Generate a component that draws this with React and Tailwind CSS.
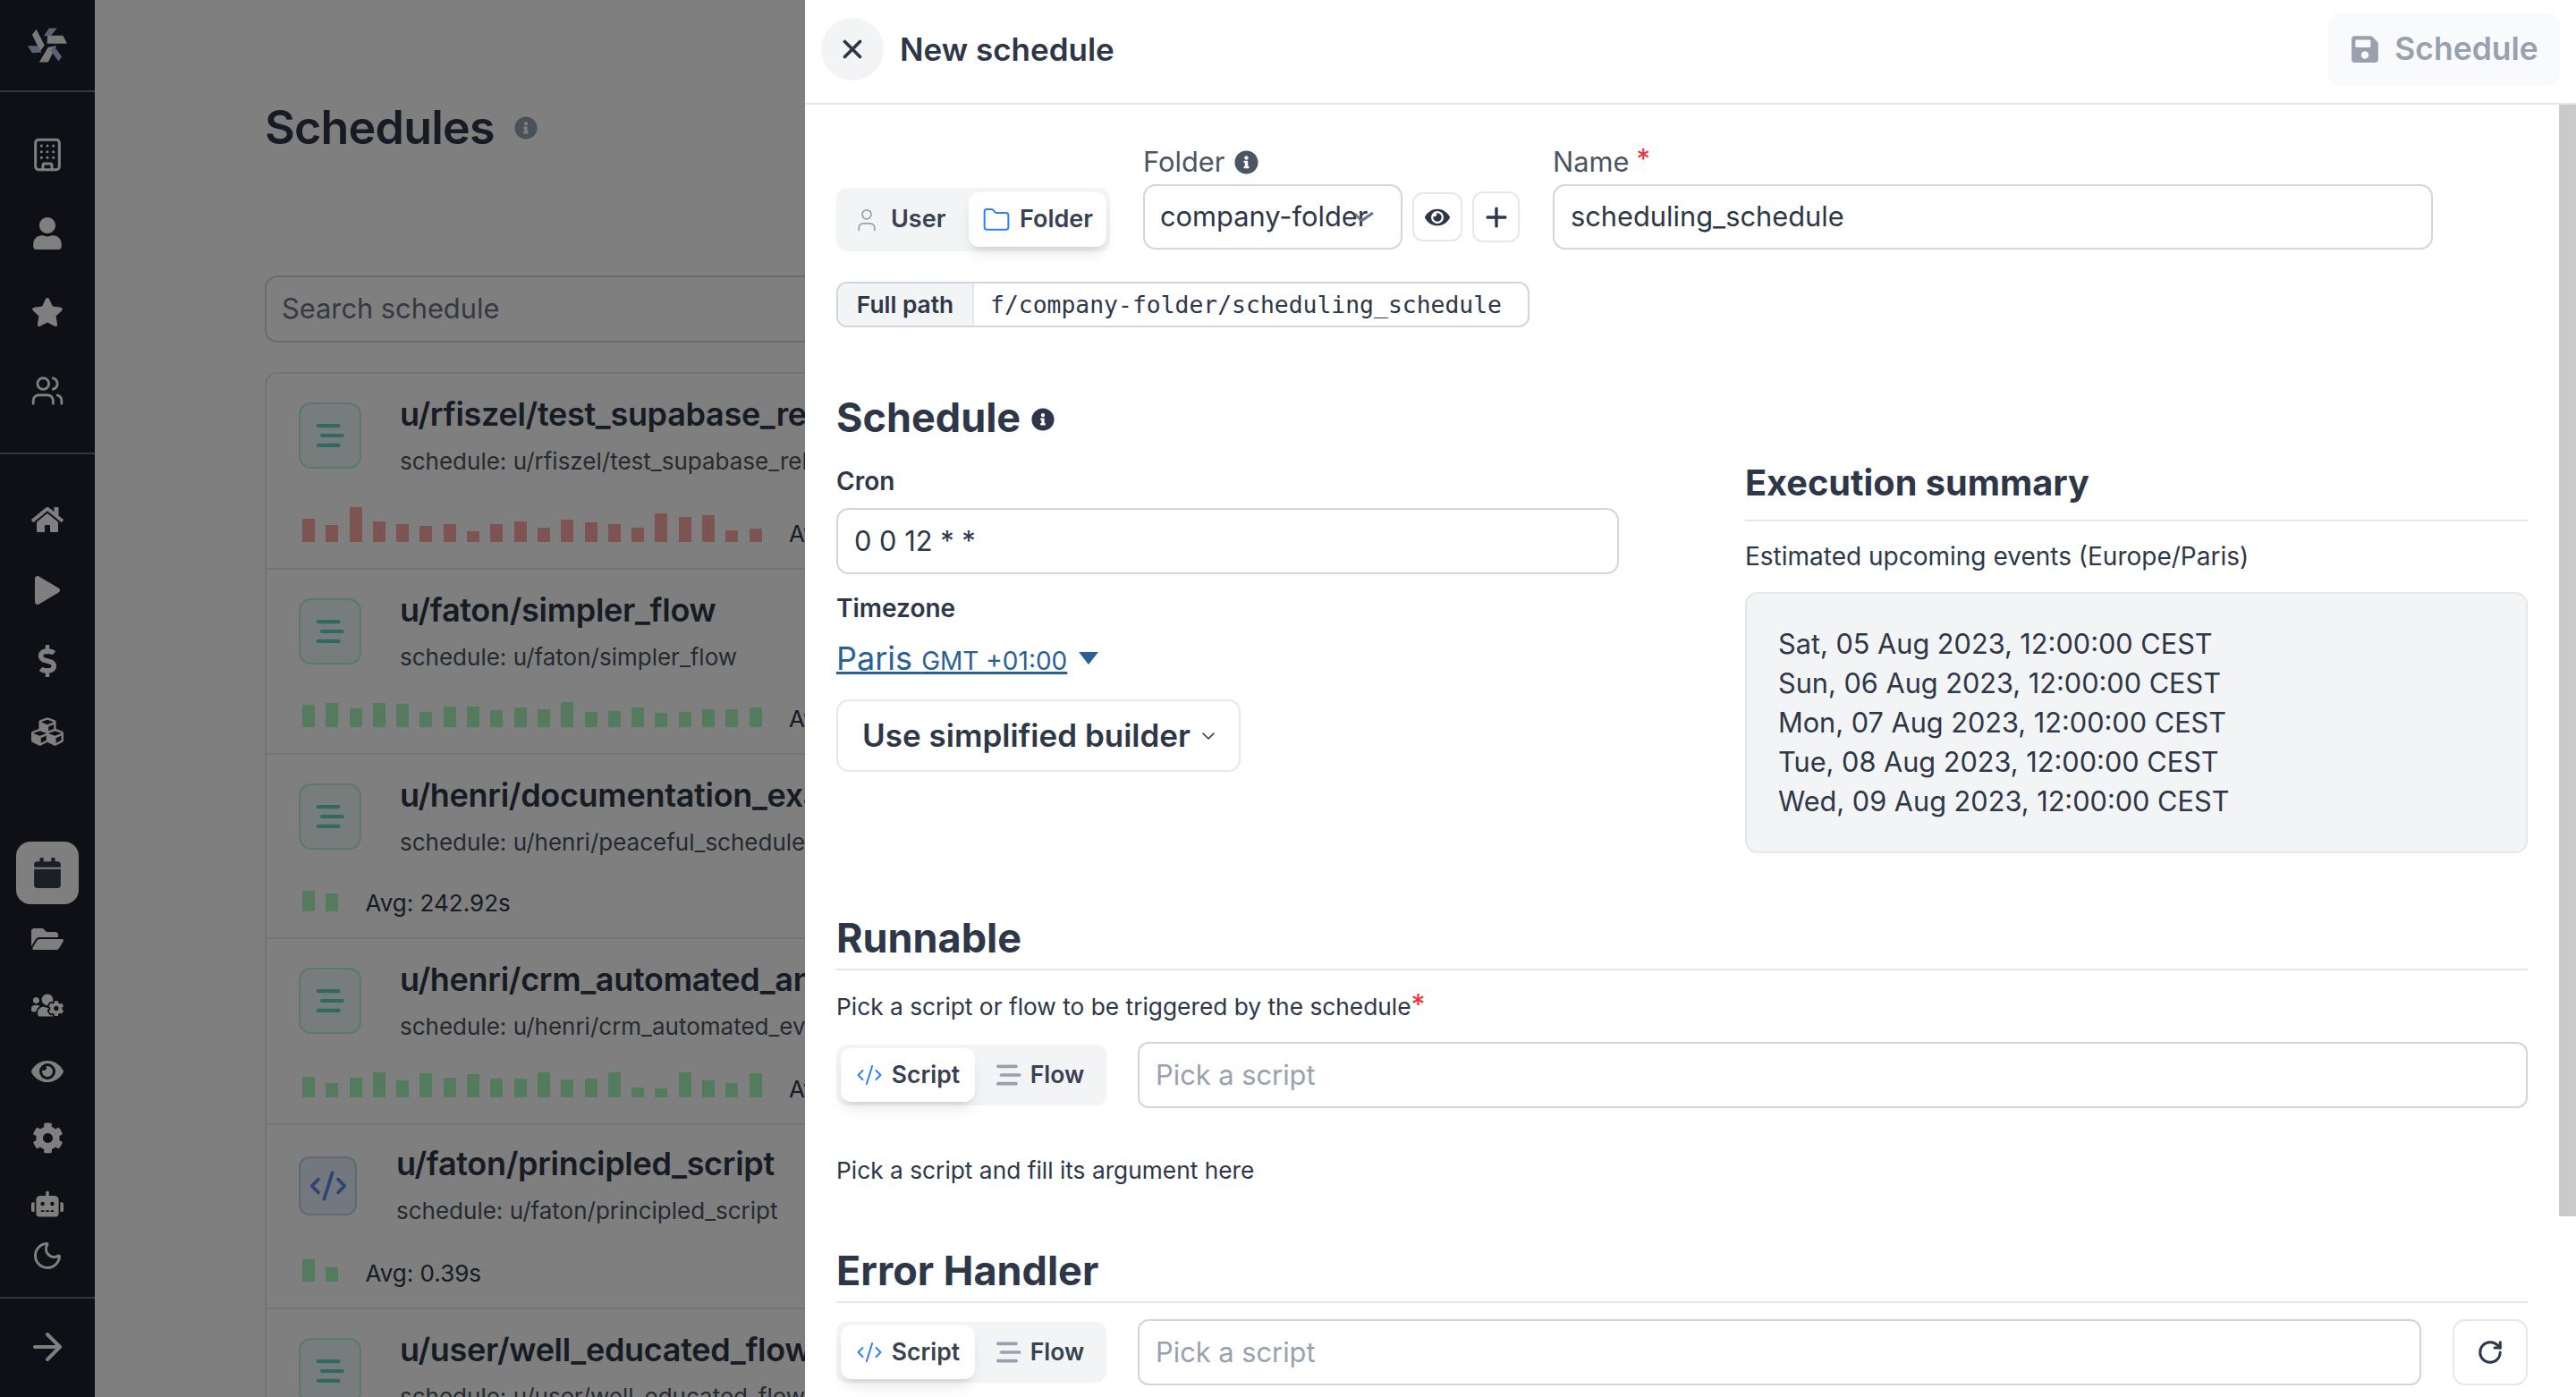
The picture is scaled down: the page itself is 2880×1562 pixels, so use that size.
import {
  ArrowRight,
  Building,
  ChevronDown,
  CodeXml,
  Folder,
  Moon,
  Plus,
  RotateCw,
  User,
  Users,
  X,
} from "lucide-react";
import {
  FaCalendar,
  FaCog,
  FaCubes,
  FaDollarSign,
  FaEye,
  FaFolderOpen,
  FaHome,
  FaInfoCircle,
  FaPlay,
  FaRobot,
  FaSave,
  FaStar,
  FaUser,
  FaUsersCog,
} from "react-icons/fa";

const rows = [
  {
    title: "u/rfiszel/test_supabase_realtime_job",
    sub: "schedule: u/rfiszel/test_supabase_release_sync",
    kind: "flow",
    color: "bg-[#fca9a4]",
    h: "h-[219px]",
    avg: "Avg: 12.40s",
    bars: [26, 19, 39, 23, 20, 18, 20, 12, 20, 23, 16, 25, 22, 20, 16, 32, 28, 30, 13, 15],
  },
  {
    title: "u/faton/simpler_flow",
    sub: "schedule: u/faton/simpler_flow",
    kind: "flow",
    color: "bg-[#aaf7be]",
    h: "h-[207px]",
    avg: "Avg: 1.02s",
    bars: [25, 27, 21, 27, 26, 17, 23, 23, 19, 22, 20, 28, 17, 18, 22, 16, 17, 20, 20, 22],
  },
  {
    title: "u/henri/documentation_example_flow",
    sub: "schedule: u/henri/peaceful_schedule_example",
    kind: "flow",
    color: "bg-[#aaf7be]",
    h: "h-[206px]",
    avg: "Avg: 242.92s",
    bars: [23, 20],
  },
  {
    title: "u/henri/crm_automated_analytics_flow",
    sub: "schedule: u/henri/crm_automated_events_sync",
    kind: "flow",
    color: "bg-[#aaf7be]",
    h: "h-[208px]",
    avg: "Avg: 3.18s",
    bars: [23, 16, 22, 28, 19, 27, 22, 26, 21, 21, 28, 20, 21, 28, 11, 10, 28, 19, 16, 27],
  },
  {
    title: "u/faton/principled_script",
    sub: "schedule: u/faton/principled_script",
    kind: "script",
    color: "bg-[#aaf7be]",
    h: "h-[206px]",
    avg: "Avg: 0.39s",
    bars: [25, 16],
  },
  {
    title: "u/user/well_educated_flow_runner",
    sub: "schedule: u/user/well_educated_flow_runner",
    kind: "flow",
    color: "bg-[#aaf7be]",
    h: "h-[206px]",
    avg: "Avg: 0.88s",
    bars: [],
  },
];

function Logo() {
  return (
    <svg viewBox="93 88 133 115" width="44" height="39">
      <polygon points="122,92 108,110 135,166 150,146" fill="#f4f4f4" />
      <polygon points="160,113 212,113 226,140 158,140" fill="#f4f4f4" />
      <polygon points="132,203 162,203 190,148 162,152" fill="#f4f4f4" />
      <polygon points="147,115 165,88 192,88 172,113" fill="#b4c6e8" />
      <polygon points="183,150 208,185 197,200 170,162" fill="#b4c6e8" />
      <polygon points="93,148 125,148 140,170 108,172" fill="#b4c6e8" />
    </svg>
  );
}

function StaggeredBars({ className }) {
  return (
    <svg viewBox="0 0 61 50" className={className} fill="none" stroke="currentColor" strokeWidth="8" strokeLinecap="round">
      <path d="M4 4h44M12 25h44M4 46h44" />
    </svg>
  );
}

function NavIcon({ children, active }) {
  return (
    <div
      className={`flex h-[70px] w-[70px] items-center justify-center rounded-[16px] ${
        active ? "bg-white text-[#333d4f]" : "text-white"
      }`}
    >
      {children}
    </div>
  );
}

function ScheduleRow({ row }) {
  const isFlow = row.kind === "flow";
  return (
    <div className={`flex flex-col justify-between border-b-2 border-gray-200 px-[36px] pb-[29px] pt-[32px] ${row.h}`}>
      <div className={`flex ${isFlow ? "gap-[43px]" : "gap-[44px] pt-[3px]"}`}>
        {isFlow ? (
          <div className="flex h-[74px] w-[70px] shrink-0 items-center justify-center rounded-[14px] border-2 border-[#b4f0dc] bg-[#eefbf8] text-[#60d2be]">
            <StaggeredBars className="h-[26px] w-[35px]" />
          </div>
        ) : (
          <div className="flex h-[66px] w-[65px] shrink-0 items-center justify-center rounded-[12px] border-2 border-[#bcd0f2] bg-[#e6eefc] text-[#5c8ae0]">
            <CodeXml size={44} strokeWidth={2} />
          </div>
        )}
        <div className={`flex flex-col gap-[15px] whitespace-nowrap ${isFlow ? "-mt-[7px]" : "-mt-[12px]"}`}>
          <div className="h-[40px] text-[36px] font-semibold leading-[40px] tracking-[-0.3px] text-[#2d3748]">{row.title}</div>
          <div className="h-[36px] text-[26px] leading-[36px] text-[#4b5563]">{row.sub}</div>
        </div>
      </div>
      <div className="ml-[4px] flex items-end gap-[12.3px]">
        {row.bars.map((h, i) => (
          <div key={i} className={`w-[14px] ${row.color}`} style={{ height: h }} />
        ))}
        <span className="-mb-[8px] ml-[18px] whitespace-nowrap text-[26px] leading-[34px] text-[#2d3748]">{row.avg}</span>
      </div>
    </div>
  );
}

function Toggle({ items, active }) {
  return (
    <div className="flex h-[68px] items-center gap-[4px] rounded-[12px] bg-gray-100 px-[5px]">
      {items.map((item) => (
        <div
          key={item.label}
          className={`flex h-[60px] items-center justify-center gap-[10px] rounded-[12px] text-[26.5px] font-semibold text-[#374151] ${item.w} ${
            item.label === active ? "bg-white shadow-lg" : ""
          }`}
        >
          {item.icon}
          {item.label}
        </div>
      ))}
    </div>
  );
}

const runToggle = [
  { label: "Script", w: "w-[150px]", icon: <CodeXml size={30} strokeWidth={1.6} className="text-blue-500" /> },
  { label: "Flow", w: "w-[138px]", icon: <StaggeredBars className="h-[24px] w-[28px] text-gray-400" /> },
];

function PickInput() {
  return (
    <div className="flex h-[74px] flex-1 items-center rounded-[12px] border-2 border-gray-300 px-[18px] text-[30.8px] text-gray-400">
      Pick a script
    </div>
  );
}

function SectionTitle({ children }) {
  return <h2 className="h-[56px] text-[45px] font-bold leading-[56px] text-[#2d3748]">{children}</h2>;
}

export default function App() {
  return (
    <div className="relative flex h-screen w-screen overflow-hidden bg-white font-['Inter',sans-serif]">
      <aside className="flex h-full w-[106px] shrink-0 flex-col bg-[#1c202a]">
        <div className="flex h-[103px] shrink-0 items-center justify-center border-b-2 border-[#6b6f78]">
          <Logo />
        </div>
        <nav className="flex h-[405px] shrink-0 flex-col items-center border-b-2 border-[#6b6f78] pt-[26px] text-white">
          <div className="flex h-[88px] items-center"><Building size={40} strokeWidth={1.8} /></div>
          <div className="flex h-[88px] items-center"><FaUser size={36} /></div>
          <div className="flex h-[88px] items-center"><FaStar size={36} /></div>
          <div className="flex h-[88px] items-center"><Users size={38} strokeWidth={1.8} /></div>
        </nav>
        <nav className="flex shrink-0 flex-col items-center pt-[33px] text-white">
          <div className="flex h-[79px] items-center"><FaHome size={36} /></div>
          <div className="flex h-[79px] items-center"><FaPlay size={32} /></div>
          <div className="flex h-[79px] items-center"><FaDollarSign size={36} /></div>
          <div className="flex h-[79px] items-center"><FaCubes size={36} /></div>
        </nav>
        <nav className="mt-[84px] flex shrink-0 flex-col items-center gap-[4px]">
          <NavIcon active><FaCalendar size={34} /></NavIcon>
          <NavIcon><FaFolderOpen size={36} /></NavIcon>
          <NavIcon><FaUsersCog size={36} /></NavIcon>
          <NavIcon><FaEye size={36} /></NavIcon>
          <NavIcon><FaCog size={35} /></NavIcon>
          <NavIcon><FaRobot size={36} /></NavIcon>
        </nav>
        <div className="mt-[5px] flex justify-center text-white">
          <Moon size={36} strokeWidth={2} />
        </div>
        <div className="mt-auto flex h-[112px] shrink-0 items-center justify-center border-t-2 border-[#6b6f78] pb-[2px] text-white">
          <ArrowRight size={48} strokeWidth={2} />
        </div>
      </aside>

      <main className="w-[1600px] shrink-0 pl-[190px] pt-[113px]">
        <div className="flex h-[60px] items-center gap-[22px]">
          <h1 className="text-[52px] font-semibold leading-[60px] tracking-[-0.8px] text-[#2d3748]">Schedules</h1>
          <FaInfoCircle size={26} className="text-gray-400" />
        </div>
        <div className="mt-[135px] flex h-[75px] items-center rounded-[14px] border-2 border-gray-300 px-[17px] text-[30.8px] text-gray-500">
          Search schedule
        </div>
        <div className="mt-[33px] rounded-tl-[14px] border-l-2 border-t-2 border-gray-200">
          {rows.map((row) => (
            <ScheduleRow key={row.title} row={row} />
          ))}
        </div>
      </main>

      {/* backdrop + drawer */}
      <div className="absolute inset-0 bg-black/50" />
      <section className="absolute bottom-0 right-0 top-0 flex w-[1980px] flex-col bg-white text-[#2d3748]">
        <header className="flex h-[117px] shrink-0 items-start justify-between border-b-2 border-gray-200">
          <div className="flex items-center gap-[18px] pl-[18px] pt-[20px]">
            <div className="flex h-[70px] w-[70px] items-center justify-center rounded-full bg-gray-100">
              <X size={34} strokeWidth={2.6} />
            </div>
            <span className="text-[35px] font-semibold">New schedule</span>
          </div>
          <div className="mr-[18px] mt-[14px] flex h-[82px] w-[259px] items-center justify-center gap-[16px] rounded-[14px] bg-gray-50 text-[35.5px] font-semibold text-gray-400">
            <FaSave size={34} />
            Schedule
          </div>
        </header>

        <div className="flex min-h-0 flex-1">
          <div className="flex-1 overflow-hidden px-[35px] pt-[39px]">
            <div className="flex items-end">
              <div className="-mb-[2px] flex h-[71px] w-[306px] items-center gap-[5px] rounded-[12px] bg-gray-100 pl-[19px] pr-[4px]">
                <div className="flex flex-1 items-center gap-[12px] text-[27px] font-semibold text-[#374151]">
                  <User size={30} strokeWidth={1.4} className="text-gray-400" />
                  User
                </div>
                <div className="flex h-[61px] w-[154px] items-center justify-center gap-[10px] rounded-[12px] bg-white text-[27px] font-semibold text-[#374151] shadow-lg">
                  <Folder size={32} strokeWidth={1.5} className="text-blue-500" />
                  Folder
                </div>
              </div>
              <div className="ml-[37px]">
                <div className="flex h-[50px] items-center gap-[11px] text-[30.8px] text-[#4b5563]">
                  Folder
                  <FaInfoCircle size={27} className="text-[#4b5563]" />
                </div>
                <div className="flex items-center">
                  <div className="relative flex h-[73px] w-[290px] items-center rounded-[14px] border-2 border-gray-300 pl-[17px] text-[30.8px]">
                    company-folder
                    <svg viewBox="0 0 22 13" className="absolute left-[234px] top-[28px] h-[13px] w-[22px] text-[#6b7280]" fill="none" stroke="currentColor">
                      <path d="M1 3l7 8" strokeWidth="2.5" />
                      <path d="M8 11L21 2" strokeWidth="3" />
                    </svg>
                  </div>
                  <div className="ml-[11px] flex h-[55px] w-[56px] items-center justify-center rounded-[12px] border-2 border-gray-200">
                    <FaEye size={28} />
                  </div>
                  <div className="ml-[11px] flex h-[57px] w-[53px] items-center justify-center rounded-[12px] border-2 border-gray-200">
                    <Plus size={34} strokeWidth={2.4} />
                  </div>
                </div>
              </div>
              <div className="ml-[37px]">
                <div className="flex h-[50px] items-center gap-[8px] text-[30.8px] text-[#4b5563]">
                  Name <span className="-mt-[6px] text-red-500">*</span>
                </div>
                <div className="flex h-[73px] w-[984px] items-center rounded-[14px] border-2 border-gray-300 px-[18px] text-[30.8px]">
                  scheduling_schedule
                </div>
              </div>
            </div>

            <div className="mt-[36px] flex h-[51px] w-[775px] overflow-hidden rounded-[12px] border-2 border-gray-300">
              <div className="flex w-[152px] items-center justify-center border-r-2 border-gray-200 bg-gray-100 text-[26.3px] font-semibold">
                Full path
              </div>
              <div className="flex flex-1 items-center pl-[18px] font-['DejaVu_Sans_Mono',monospace] text-[26.4px]">
                f/company-folder/scheduling_schedule
              </div>
            </div>

            <div className="mt-[73px] flex items-center gap-[12px]">
              <SectionTitle>Schedule</SectionTitle>
              <FaInfoCircle size={26} className="mt-[4px]" />
            </div>

            <div className="mt-[23px] grid grid-cols-2 gap-x-[141px]">
              <div>
                <div className="h-[40px] text-[28px] font-semibold leading-[40px]">Cron</div>
                <div className="mt-[10px] flex h-[74px] items-center rounded-[14px] border-2 border-gray-300 px-[18px] text-[30.8px]">
                  0 0 12 * *
                </div>
                <div className="mt-[18px] h-[40px] text-[28px] font-semibold leading-[40px]">Timezone</div>
                <div className="mt-[11px] flex h-[50px] items-center gap-[13px] text-[#2a6099]">
                  <span className="whitespace-nowrap text-[36px] underline">
                    Paris <span className="text-[28px]">GMT +01:00</span>
                  </span>
                  <svg viewBox="0 0 22 14" className="h-[14px] w-[22px]" fill="currentColor">
                    <path d="M0 0h22L11 14z" />
                  </svg>
                </div>
                <div className="mt-[21px] flex h-[81px] w-[452px] items-center gap-[8px] rounded-[14px] border-2 border-gray-200 pl-[27px] text-[35px] font-semibold">
                  Use simplified builder
                  <ChevronDown size={24} strokeWidth={1.6} />
                </div>
              </div>
              <div className="-mt-[8px]">
                <div className="h-[73px] border-b-2 border-gray-200 text-[39.7px] font-bold leading-[60px]">Execution summary</div>
                <p className="mt-[21px] h-[36px] text-[28px] leading-[36px]">Estimated upcoming events (Europe/Paris)</p>
                <div className="mt-[22px] h-[292px] rounded-[14px] border-2 border-gray-200 bg-gray-100 pl-[35px] pt-[34px] text-[30.7px] leading-[44px]">
                  <div>Sat, 05 Aug 2023, 12:00:00 CEST</div>
                  <div>Sun, 06 Aug 2023, 12:00:00 CEST</div>
                  <div>Mon, 07 Aug 2023, 12:00:00 CEST</div>
                  <div>Tue, 08 Aug 2023, 12:00:00 CEST</div>
                  <div>Wed, 09 Aug 2023, 12:00:00 CEST</div>
                </div>
              </div>
            </div>

            <div className="mt-[67px] border-b-2 border-gray-200 pb-[6px]">
              <SectionTitle>Runnable</SectionTitle>
            </div>
            <p className="mt-[23px] h-[36px] text-[26.3px] leading-[36px]">
              Pick a script or flow to be triggered by the schedule<span className="text-[32px] leading-[20px] text-red-500">*</span>
            </p>
            <div className="mt-[21px] flex items-center gap-[35px]">
              <Toggle items={runToggle} active="Script" />
              <PickInput />
            </div>
            <p className="mt-[52px] h-[36px] text-[26.3px] leading-[36px]">Pick a script and fill its argument here</p>
            <div className="mt-[66px] border-b-2 border-gray-200 pb-[6px]">
              <SectionTitle>Error Handler</SectionTitle>
            </div>
            <div className="mt-[18px] flex items-center gap-[35px]">
              <Toggle items={runToggle} active="Script" />
              <PickInput />
              <div className="flex h-[74px] w-[84px] items-center justify-center rounded-[14px] border-2 border-gray-200">
                <RotateCw size={30} strokeWidth={2.4} />
              </div>
            </div>
          </div>
          <div className="w-[19px] shrink-0">
            <div className="h-[1243px] bg-[#cacaca]" />
          </div>
        </div>
      </section>
    </div>
  );
}
